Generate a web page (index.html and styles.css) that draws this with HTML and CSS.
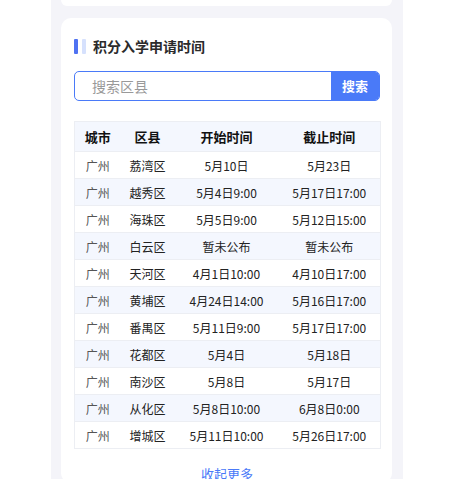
FILE: index.html
```html
<!DOCTYPE html>
<html lang="zh-CN">
<head>
<meta charset="utf-8">
<link rel="stylesheet" href="styles.css">
</head>
<body>
<div class="column">
  <div class="card card-prev"></div>
  <div class="card card-main">
    <div class="title">
      <span class="bar bar-a"></span><span class="bar bar-b"></span>
      <h2>积分入学申请时间</h2>
    </div>
    <div class="search">
      <div class="search-input">搜索区县</div>
      <div class="search-btn">搜索</div>
    </div>
    <table class="schedule">
      <colgroup><col class="c1"><col class="c2"><col class="c3"><col class="c4"></colgroup>
      <thead>
        <tr><th>城市</th><th>区县</th><th>开始时间</th><th>截止时间</th></tr>
      </thead>
      <tbody>
        <tr><td class="city">广州</td><td>荔湾区</td><td>5月10日</td><td>5月23日</td></tr>
        <tr><td class="city">广州</td><td>越秀区</td><td>5月4日9:00</td><td>5月17日17:00</td></tr>
        <tr><td class="city">广州</td><td>海珠区</td><td>5月5日9:00</td><td>5月12日15:00</td></tr>
        <tr><td class="city">广州</td><td>白云区</td><td>暂未公布</td><td>暂未公布</td></tr>
        <tr><td class="city">广州</td><td>天河区</td><td>4月1日10:00</td><td>4月10日17:00</td></tr>
        <tr><td class="city">广州</td><td>黄埔区</td><td>4月24日14:00</td><td>5月16日17:00</td></tr>
        <tr><td class="city">广州</td><td>番禺区</td><td>5月11日9:00</td><td>5月17日17:00</td></tr>
        <tr><td class="city">广州</td><td>花都区</td><td>5月4日</td><td>5月18日</td></tr>
        <tr><td class="city">广州</td><td>南沙区</td><td>5月8日</td><td>5月17日</td></tr>
        <tr><td class="city">广州</td><td>从化区</td><td>5月8日10:00</td><td>6月8日0:00</td></tr>
        <tr><td class="city">广州</td><td>增城区</td><td>5月11日10:00</td><td>5月26日17:00</td></tr>
      </tbody>
    </table>
    <div class="more">收起更多</div>
  </div>
</div>
</body>
</html>
```

FILE: styles.css
```css
html, body {
  margin: 0;
  padding: 0;
  background: #ffffff;
  font-family: "Noto Sans CJK SC", "Noto Sans", sans-serif;
  color: #222;
}
.column {
  margin-left: 51px;
  width: 352px;
  box-sizing: border-box;
  padding: 0 11px 0 10px;
  background: #f4f4f9;
  height: 479px;
  overflow: hidden;
}
.card {
  background: #ffffff;
  border-radius: 10px;
}
.card-prev {
  height: 6px;
  border-radius: 0 0 10px 10px;
}
.card-main {
  margin-top: 12px;
  padding: 20px 12px 0 13px;
}
.title {
  display: flex;
  align-items: center;
  height: 16px;
}
.bar {
  width: 4px;
  height: 15px;
  border-radius: 1px;
}
.bar-a { background: #4f72f2; }
.bar-b { background: #d6e1fd; margin-left: 4px; }
.title h2 {
  margin: 0 0 0 7px;
  font-size: 14px;
  font-weight: 700;
  color: #2b2b2b;
  line-height: 16px;
}
.search {
  display: flex;
  margin-top: 17px;
  height: 30px;
  border: 1px solid #4a7af8;
  border-radius: 5px;
  overflow: hidden;
  box-sizing: border-box;
}
.search-input {
  flex: 1;
  padding-left: 17px;
  font-size: 14px;
  color: #999;
  line-height: 28px;
}
.search-btn {
  width: 48px;
  background: #4a7af8;
  color: #fff;
  font-size: 13px;
  font-weight: 700;
  text-align: center;
  line-height: 28px;
}
.schedule {
  margin-top: 20px;
  width: 306px;
  border-collapse: collapse;
  table-layout: fixed;
  border: 1px solid #eceef3;
}
.c1 { width: 46px; }
.c2 { width: 54px; }
.c3 { width: 104px; }
.c4 { width: 102px; }
.schedule th {
  height: 29px;
  padding: 0;
  font-size: 13px;
  font-weight: 700;
  color: #111;
  background: #f4f7fe;
  text-align: center;
}
.schedule td {
  height: 26px;
  padding: 0;
  font-size: 12px;
  color: #222;
  text-align: center;
  border-top: 1px solid #eceef3;
}
.schedule td.city { color: #555; }
.schedule tbody tr:nth-child(even) td { background: #f4f7fe; }
.more {
  margin-top: 15px;
  text-align: center;
  font-size: 13px;
  color: #4a7af8;
}
```
